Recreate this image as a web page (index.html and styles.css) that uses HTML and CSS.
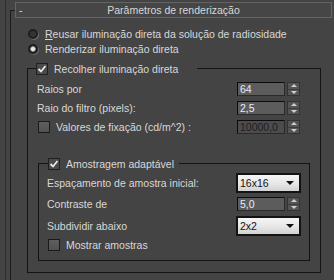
FILE: index.html
```html
<!DOCTYPE html>
<html>
<head>
<meta charset="utf-8">
<link rel="stylesheet" href="styles.css">
</head>
<body>
<div class="panel">
  <div class="rollout">
    <div class="rollout-head">
      <div class="rollout-title">
        <span class="minus">-</span>
        <span class="title">Parâmetros de renderização</span>
        <span></span>
      </div>
    </div>
    <div class="rollout-body">
      <div class="radio-row"><span class="radio"></span><span><u>R</u>eusar iluminação direta da solução de radiosidade</span></div>
      <div class="radio-row"><span class="radio checked"></span><span>Renderizar iluminação direta</span></div>

      <div class="group g1">
        <div class="group-head">
          <div class="head-label">
            <span class="check on"><svg width="10" height="10" viewBox="0 0 10 10"><path d="M1.5 5 L4 7.5 L8.5 2" fill="none" stroke="#e8e8e8" stroke-width="1.8"/></svg></span>
            <span>Recolher iluminação direta</span>
          </div>
        </div>
        <div class="group-body">
          <div class="row">
            <span class="label">Raios por</span>
            <div class="spin"><div class="field">64</div><div class="spinner"><span class="up"></span><span class="down"></span></div></div>
          </div>
          <div class="row">
            <span class="label">Raio do filtro (pixels):</span>
            <div class="spin"><div class="field">2,5</div><div class="spinner"><span class="up"></span><span class="down"></span></div></div>
          </div>
          <div class="row">
            <span class="label with-check"><span class="check"></span><span>Valores de fixação (cd/m^2) :</span></span>
            <div class="spin"><div class="field disabled">10000,0</div><div class="spinner"><span class="up"></span><span class="down"></span></div></div>
          </div>

          <div class="group g2">
            <div class="group-head">
              <div class="head-label">
                <span class="check on"><svg width="10" height="10" viewBox="0 0 10 10"><path d="M1.5 5 L4 7.5 L8.5 2" fill="none" stroke="#e8e8e8" stroke-width="1.8"/></svg></span>
                <span>Amostragem adaptável</span>
              </div>
            </div>
            <div class="group-body">
              <div class="row tall">
                <span class="label">Espaçamento de amostra inicial:</span>
                <div class="dropdown"><span>16x16</span><span class="arrow"></span></div>
              </div>
              <div class="row r-b">
                <span class="label">Contraste de</span>
                <div class="spin"><div class="field">5,0</div><div class="spinner"><span class="up"></span><span class="down"></span></div></div>
              </div>
              <div class="row tall r-c">
                <span class="label">Subdividir abaixo</span>
                <div class="dropdown"><span>2x2</span><span class="arrow"></span></div>
              </div>
              <div class="row short r-d">
                <span class="label with-check"><span class="check"></span><span>Mostrar amostras</span></span>
              </div>
            </div>
          </div>
        </div>
      </div>
    </div>
  </div>
</div>
</body>
</html>
```

FILE: styles.css
```css
* { box-sizing: border-box; }

html, body {
  margin: 0;
  padding: 0;
  width: 334px;
  height: 280px;
  overflow: hidden;
  background: #444444;
}

body {
  font-family: "Liberation Sans", Arial, sans-serif;
  font-size: 10.5px;
  color: #d8d8d8;
}

.panel {
  margin-left: 5px;
  height: 280px;
  border-left: 1px solid #2e2e2e;
  padding: 2px 0 0 4px;
}

.rollout-head {
  display: flex;
  height: 16px;
}

.rollout-head::before {
  content: "";
  width: 4px;
  flex: none;
  margin-top: 8px;
  border-top: 1px solid #1c1c1c;
  border-left: 1px solid #1c1c1c;
}

.rollout-title {
  width: 317px;
  height: 16px;
  border: 1px solid #646464;
  background: #464646;
  display: grid;
  grid-template-columns: 1fr auto 1fr;
  align-items: center;
  line-height: 14px;
}

.minus {
  padding-left: 3px;
}

.rollout-body {
  border-left: 1px solid #1c1c1c;
  height: 270px;
  padding-top: 8px;
}

.radio-row {
  display: flex;
  align-items: center;
  height: 15px;
  padding-left: 17px;
  gap: 7px;
}

.radio-row u {
  text-decoration-thickness: 1px;
  text-underline-offset: 1px;
}

.radio {
  width: 10px;
  height: 10px;
  border-radius: 50%;
  background: #353535;
  border: 2px solid #1e1e1e;
  box-shadow: 1px 1px 0 -0px #6a6a6a;
  flex: none;
}

.radio.checked {
  background: radial-gradient(circle, #f0f0f0 0, #e0e0e0 1.6px, #8a8a8a 2.6px, #2a2a2a 3.2px);
}

/* group boxes */
.group-head {
  display: flex;
  height: 12px;
}

.group-head::before {
  content: "";
  width: 8px;
  flex: none;
  margin-top: 5px;
  border-top: 1px solid #141414;
  border-left: 1px solid #141414;
}

.group-head::after {
  content: "";
  flex: 1;
  margin-top: 5px;
  border-top: 1px solid #141414;
  border-right: 1px solid #141414;
}

.head-label {
  display: flex;
  align-items: center;
  gap: 6px;
  height: 12px;
}

.group-body {
  border: 1px solid #141414;
  border-top: none;
}

.g1 {
  width: 294px;
  margin: 7px 0 0 16px;
}

.g1 > .group-head .head-label { width: 161px; }

.g1 > .group-body {
  padding: 7px 20px 11px 9px;
}

.g2 {
  margin: 24px -10px 0 1px;
}

.g2 > .group-head::before { width: 9px; }
.g2 > .group-head .head-label { width: 131px; }

.g2 > .group-body {
  padding: 3px 9px 9px 8px;
}

/* rows */
.row {
  display: flex;
  align-items: center;
  height: 14px;
}

.row + .row { margin-top: 5px; }

.row.tall { height: 20px; }
.row.short { height: 12px; }
.row.r-b { margin-top: 4px; }
.row.r-c { margin-top: 5px; }
.row.r-d { margin-top: 3px; }

.label {
  flex: 1;
  white-space: nowrap;
}

.with-check {
  display: flex;
  align-items: center;
  gap: 6px;
}

.check {
  width: 12px;
  height: 12px;
  flex: none;
  border: 1px solid #1a1a1a;
  background: linear-gradient(#5e5e5e, #525252);
  display: flex;
  align-items: center;
  justify-content: center;
}

.g1 .row .with-check .check { margin-left: 1px; }

.check.on {
  background: #4a4a4a;
  border: 1px solid #202020;
}

/* spinner fields */
.spin {
  display: flex;
  gap: 2px;
}

.field {
  width: 48px;
  height: 14px;
  background: #5c5c5c;
  border: 1px solid #2a2a2a;
  border-top-color: #0c0c0c;
  border-left-color: #0c0c0c;
  color: #e8ecf6;
  padding-left: 2px;
  line-height: 12px;
}

.field.disabled {
  background: #4c4c4c;
  color: #1c1c1c;
}

.spinner {
  width: 13px;
  height: 14px;
  background: #545454;
  border: 1px solid #333;
  display: flex;
  flex-direction: column;
}

.spinner .up,
.spinner .down {
  flex: 1;
  display: flex;
  align-items: center;
  justify-content: center;
}

.spinner .up { border-bottom: 1px solid #3c3c3c; }

.spinner .up::before {
  content: "";
  border-left: 3px solid transparent;
  border-right: 3px solid transparent;
  border-bottom: 3px solid #cfcfcf;
}

.spinner .down::before {
  content: "";
  border-left: 3px solid transparent;
  border-right: 3px solid transparent;
  border-top: 3px solid #cfcfcf;
}

/* dropdowns */
.dropdown {
  width: 65px;
  height: 20px;
  margin-right: -1px;
  border: 2px solid #131313;
  background: linear-gradient(#f6f6f6, #e6e6e6 55%, #d2d2d2);
  color: #121212;
  display: flex;
  align-items: center;
  justify-content: space-between;
  padding: 0 5px 0 2px;
}

.dropdown .arrow {
  border-left: 4px solid transparent;
  border-right: 4px solid transparent;
  border-top: 4px solid #111;
}
```
